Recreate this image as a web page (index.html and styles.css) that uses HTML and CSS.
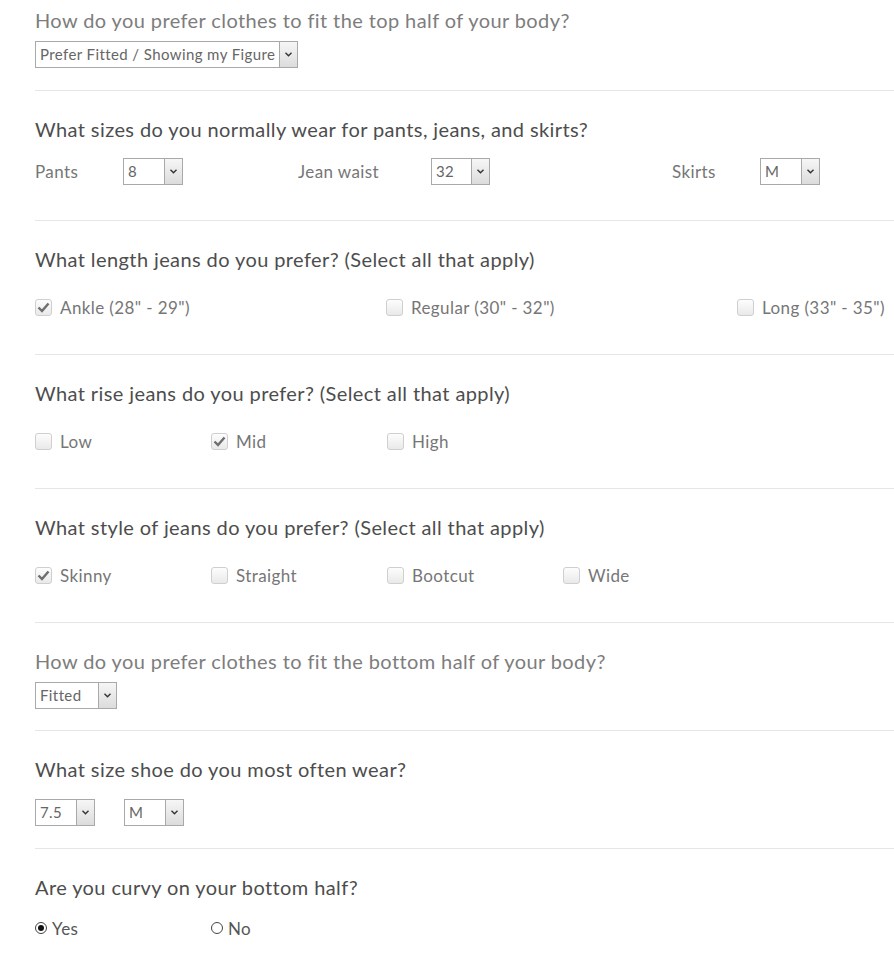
FILE: index.html
```html
<!DOCTYPE html>
<html>
<head>
<meta charset="utf-8">
<link rel="stylesheet" href="styles.css">
</head>
<body>
<div class="form">

  <section class="sec sec-first">
    <h2 class="q q-light">How do you prefer clothes to fit the top half of your body?</h2>
    <div class="select-row">
      <span class="select w-263"><span class="val">Prefer Fitted / Showing my Figure</span><span class="arrow"><svg width="7" height="5" viewBox="0 0 7 5"><path d="M0.5 0.8 L3.5 3.8 L6.5 0.8" fill="none" stroke="#333" stroke-width="1.4"/></svg></span></span>
    </div>
  </section>

  <section class="sec">
    <h2 class="q">What sizes do you normally wear for pants, jeans, and skirts?</h2>
    <div class="sizes">
      <div class="size g1"><span class="lbl l1">Pants</span><span class="select w-60"><span class="val">8</span><span class="arrow"><svg width="7" height="5" viewBox="0 0 7 5"><path d="M0.5 0.8 L3.5 3.8 L6.5 0.8" fill="none" stroke="#333" stroke-width="1.4"/></svg></span></span></div>
      <div class="size g2"><span class="lbl l2">Jean waist</span><span class="select w-59"><span class="val">32</span><span class="arrow"><svg width="7" height="5" viewBox="0 0 7 5"><path d="M0.5 0.8 L3.5 3.8 L6.5 0.8" fill="none" stroke="#333" stroke-width="1.4"/></svg></span></span></div>
      <div class="size g3"><span class="lbl l1">Skirts</span><span class="select w-60"><span class="val">M</span><span class="arrow"><svg width="7" height="5" viewBox="0 0 7 5"><path d="M0.5 0.8 L3.5 3.8 L6.5 0.8" fill="none" stroke="#333" stroke-width="1.4"/></svg></span></span></div>
    </div>
  </section>

  <section class="sec sec-check">
    <h2 class="q">What length jeans do you prefer? (Select all that apply)</h2>
    <div class="opts">
      <label class="opt opt-wide"><span class="cb checked"><svg width="13" height="11" viewBox="0 0 13 11"><path d="M1.5 5.5 L5 9 L11.5 1.5" fill="none" stroke="#6e6e6e" stroke-width="2.4"/></svg></span>Ankle (28" - 29")</label>
      <label class="opt opt-wide"><span class="cb"></span>Regular (30" - 32")</label>
      <label class="opt opt-long"><span class="cb"></span>Long (33" - 35")</label>
    </div>
  </section>

  <section class="sec sec-check">
    <h2 class="q">What rise jeans do you prefer? (Select all that apply)</h2>
    <div class="opts">
      <label class="opt"><span class="cb"></span>Low</label>
      <label class="opt"><span class="cb checked"><svg width="13" height="11" viewBox="0 0 13 11"><path d="M1.5 5.5 L5 9 L11.5 1.5" fill="none" stroke="#6e6e6e" stroke-width="2.4"/></svg></span>Mid</label>
      <label class="opt"><span class="cb"></span>High</label>
    </div>
  </section>

  <section class="sec sec-check">
    <h2 class="q">What style of jeans do you prefer? (Select all that apply)</h2>
    <div class="opts">
      <label class="opt"><span class="cb checked"><svg width="13" height="11" viewBox="0 0 13 11"><path d="M1.5 5.5 L5 9 L11.5 1.5" fill="none" stroke="#6e6e6e" stroke-width="2.4"/></svg></span>Skinny</label>
      <label class="opt"><span class="cb"></span>Straight</label>
      <label class="opt"><span class="cb"></span>Bootcut</label>
      <label class="opt"><span class="cb"></span>Wide</label>
    </div>
  </section>

  <section class="sec sec-select">
    <h2 class="q q-light">How do you prefer clothes to fit the bottom half of your body?</h2>
    <div class="select-row">
      <span class="select w-82"><span class="val">Fitted</span><span class="arrow"><svg width="7" height="5" viewBox="0 0 7 5"><path d="M0.5 0.8 L3.5 3.8 L6.5 0.8" fill="none" stroke="#333" stroke-width="1.4"/></svg></span></span>
    </div>
  </section>

  <section class="sec sec-shoe">
    <h2 class="q">What size shoe do you most often wear?</h2>
    <div class="select-row shoe-row">
      <span class="select w-60"><span class="val">7.5</span><span class="arrow"><svg width="7" height="5" viewBox="0 0 7 5"><path d="M0.5 0.8 L3.5 3.8 L6.5 0.8" fill="none" stroke="#333" stroke-width="1.4"/></svg></span></span>
      <span class="select w-60"><span class="val">M</span><span class="arrow"><svg width="7" height="5" viewBox="0 0 7 5"><path d="M0.5 0.8 L3.5 3.8 L6.5 0.8" fill="none" stroke="#333" stroke-width="1.4"/></svg></span></span>
    </div>
  </section>

  <section class="sec sec-radio">
    <h2 class="q">Are you curvy on your bottom half?</h2>
    <div class="opts">
      <label class="opt ropt"><span class="rb on"></span>Yes</label>
      <label class="opt ropt"><span class="rb"></span>No</label>
    </div>
  </section>

</div>
</body>
</html>
```

FILE: styles.css
```css
html, body {
  margin: 0;
  padding: 0;
  background: #fff;
  overflow-x: hidden;
}
body {
  font-family: Lato, "Open Sans", sans-serif;
  color: #4a4a4a;
  letter-spacing: 0.4px;
}
.form {
  margin-left: 35px;
}
.sec {
  border-top: 1px solid #e6e6e6;
  padding-top: 26px;
  padding-bottom: 35px;
}
.sec-first {
  border-top: none;
  padding-top: 8px;
  padding-bottom: 22px;
}
.q {
  margin: 0;
  font-size: 20px;
  line-height: 24px;
  font-weight: normal;
  color: #4d4d4d;
}
.q-light {
  color: #7d7d7d;
}
.select-row {
  display: flex;
  margin-top: 9px;
}
.sec-select {
  padding-bottom: 21px;
}
.sec-shoe {
  padding-bottom: 22px;
}
.shoe-row {
  margin-top: 18px;
  gap: 29px;
}
.select {
  display: inline-flex;
  align-items: stretch;
  height: 27px;
  box-sizing: border-box;
  border: 1px solid #a9a9a9;
  background: #fff;
  font-size: 15px;
  color: #666;
}
.select .val {
  flex: 1;
  padding-left: 4px;
  line-height: 25px;
  white-space: nowrap;
}
.select .arrow {
  width: 17px;
  border-left: 1px solid #a9a9a9;
  background: linear-gradient(#f6f6f6, #dcdcdc);
  display: flex;
  align-items: center;
  justify-content: center;
}
.w-263 { width: 263px; }
.w-60 { width: 60px; }
.w-59 { width: 59px; }
.w-82 { width: 82px; }

.sizes {
  display: flex;
  margin-top: 17px;
}
.size {
  display: flex;
  align-items: center;
}
.g1 { width: 263px; }
.g2 { width: 374px; }
.lbl {
  font-size: 17px;
  color: #767676;
}
.l1 { width: 88px; }
.l2 { width: 133px; }

.opts {
  display: flex;
  margin-top: 24px;
}
.opt {
  display: flex;
  align-items: center;
  width: 176px;
  height: 24px;
  font-size: 17px;
  color: #767676;
  white-space: nowrap;
}
.opt-wide {
  width: 351px;
}
.opt-long {
  width: auto;
}
.cb {
  width: 17px;
  height: 17px;
  box-sizing: border-box;
  border: 1px solid #cfcfcf;
  border-radius: 3px;
  background: linear-gradient(#fdfdfd, #e9e9e9);
  margin-right: 8px;
  display: flex;
  align-items: center;
  justify-content: center;
}
.sec-radio .opts {
  margin-top: 17px;
}
.ropt {
  color: #555;
}
.rb {
  width: 12px;
  height: 12px;
  box-sizing: border-box;
  border: 1px solid #444;
  border-radius: 50%;
  margin-right: 5px;
  position: relative;
  background: #fff;
}
.rb.on::after {
  content: "";
  position: absolute;
  left: 2px;
  top: 2px;
  width: 6px;
  height: 6px;
  border-radius: 50%;
  background: #111;
}
```
